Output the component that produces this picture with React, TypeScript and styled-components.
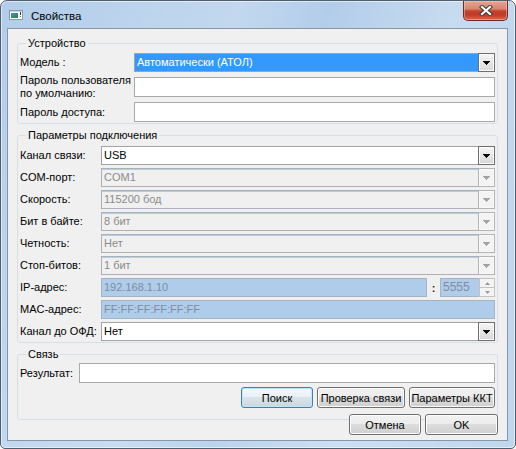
import React from "react";
import styled, { createGlobalStyle } from "styled-components";

const GlobalStyle = createGlobalStyle`
  html, body { margin: 0; padding: 0; background: #ffffff; }
  body { width: 516px; height: 449px; overflow: hidden; }
  *, *::before, *::after { box-sizing: border-box; }
`;

type Tone = "selected" | "enabled" | "disabled";

const Frame = styled.div`
  width: 516px;
  height: 449px;
  display: flex;
  flex-direction: column;
  border: 1px solid #4f5f70;
  border-radius: 7px 7px 5px 5px;
  padding: 0 7px 7px 6px;
  background:
    linear-gradient(105deg, rgba(255,255,255,0) 0%, rgba(255,255,255,0.22) 38%, rgba(255,255,255,0) 52%, rgba(255,255,255,0.28) 72%, rgba(255,255,255,0.08) 100%),
    linear-gradient(180deg, #b2cdea 0%, #bad3ed 100%);
  box-shadow: inset 0 0 0 1px rgba(255, 255, 255, 0.55);
  font-family: "Liberation Sans", Arial, sans-serif;
  font-size: 11px;
  color: #000;
  overflow: hidden;
`;

const TitleBar = styled.div`
  height: 27px;
  flex: none;
  display: flex;
  align-items: flex-start;
`;

const AppIcon = styled.svg`
  flex: none;
  margin: 9px 0 0 2px;
`;

const Title = styled.span`
  margin: 8px 0 0 8px;
  font-size: 11.5px;
  line-height: 14px;
  color: #000;
`;

const CloseButton = styled.div`
  margin-left: auto;
  width: 45px;
  height: 20px;
  border: 1px solid #6f2a20;
  border-top: none;
  border-radius: 0 0 5px 5px;
  background: linear-gradient(180deg, #e3a594 0%, #d88670 42%, #c3432d 52%, #c03b26 72%, #d8684d 100%);
  box-shadow: inset 0 0 0 1px rgba(255, 214, 200, 0.45);
  display: flex;
  align-items: center;
  justify-content: center;
`;

const Client = styled.div`
  flex: 1;
  display: flex;
  flex-direction: column;
  background: #f0f0f0;
  border: 1px solid #8796a6;
  padding: 8px 9px 5px 9px;
`;

const Group = styled.fieldset<{ $top: number; $pad: string }>`
  margin: ${(p) => p.$top}px 0 0 0;
  padding: ${(p) => p.$pad};
  border: 1px solid #d5dfe5;
  border-radius: 3px;
  min-width: 0;
`;

const Legend = styled.legend`
  margin-left: 6px;
  padding: 0 2px;
  font-size: 11px;
  line-height: 13px;
`;

const FormGrid = styled.div<{ $label: number; $rows: string; $gap: number }>`
  display: grid;
  grid-template-columns: ${(p) => p.$label}px minmax(0, 1fr);
  grid-template-rows: ${(p) => p.$rows};
  row-gap: ${(p) => p.$gap}px;
  align-items: center;
`;

const Label = styled.span`
  font-size: 11px;
  line-height: 13px;
  white-space: nowrap;
`;

const TextBox = styled.div<{ $h: number; $blue?: boolean }>`
  height: ${(p) => p.$h}px;
  border: 1px solid ${(p) => (p.$blue ? "#a7b3bf" : "#a9a9a9")};
  background: ${(p) => (p.$blue ? "#afcceb" : "#ffffff")};
  padding: 0 2px;
  line-height: ${(p) => p.$h - 2}px;
  color: #7e8ea0;
  white-space: nowrap;
  overflow: hidden;
`;

const ComboFrame = styled.div<{ $tone: Tone }>`
  height: 19px;
  display: flex;
  border: 1px solid ${(p) => (p.$tone === "disabled" ? "#aeb1b4" : "#a3a3a3")};
  background: ${(p) => (p.$tone === "disabled" ? "#f0f0f0" : "#ffffff")};
  box-shadow: ${(p) => (p.$tone === "disabled" ? "inset 0 1px 0 #b4cee9" : "none")};
`;

const ComboValue = styled.div<{ $tone: Tone }>`
  flex: 1;
  min-width: 0;
  padding-left: 2px;
  line-height: 17px;
  white-space: nowrap;
  overflow: hidden;
  background: ${(p) => (p.$tone === "selected" ? "#3399ff" : "transparent")};
  color: ${(p) => (p.$tone === "selected" ? "#ffffff" : p.$tone === "disabled" ? "#8b8b8b" : "#000000")};
`;

const ArrowBox = styled.div<{ $tone: Tone }>`
  width: 17px;
  flex: none;
  margin: -1px -1px -1px 0;
  display: flex;
  align-items: center;
  justify-content: center;
  border: 1px solid ${(p) => (p.$tone === "disabled" ? "#b4b4b4" : "#6e6e6e")};
  background: ${(p) =>
    p.$tone === "disabled" ? "#f3f3f3" : "linear-gradient(180deg, #f6f6f6 0%, #e6e6e6 50%, #d7d7d7 100%)"};
  box-shadow: inset 0 0 0 1px ${(p) => (p.$tone === "disabled" ? "#f9f9f9" : "#fbfbfb")};
`;

const IpRow = styled.div`
  height: 19px;
  display: flex;
  align-items: center;
`;

const IpField = styled(TextBox)`
  flex: 1;
  min-width: 0;
`;

const Colon = styled.span`
  width: 13px;
  flex: none;
  text-align: center;
  font-weight: bold;
  font-size: 11px;
  color: #222;
`;

const SpinBox = styled.div`
  width: 55px;
  height: 19px;
  flex: none;
  display: flex;
  border: 1px solid #a7b3bf;
  background: #afcceb;
`;

const SpinText = styled.div`
  flex: 1;
  padding-left: 2px;
  line-height: 17px;
  font-size: 12px;
  color: #7e8ea0;
`;

const SpinButtons = styled.div`
  width: 16px;
  display: flex;
  flex-direction: column;
  margin: -1px -1px -1px 0;
`;

const SpinHalf = styled.div`
  flex: 1;
  display: flex;
  align-items: center;
  justify-content: center;
  border: 1px solid #c3c3c3;
  background: #f4f4f4;
  & + & {
    border-top: none;
  }
`;

const ButtonRow = styled.div<{ $top: number }>`
  margin-top: ${(p) => p.$top}px;
  display: flex;
  justify-content: flex-end;
  gap: 4px;
`;

const PushButton = styled.button<{ $w: number; $default?: boolean }>`
  width: ${(p) => p.$w}px;
  height: 21px;
  padding: 0;
  font-family: inherit;
  font-size: 11px;
  color: #000;
  white-space: nowrap;
  border: 1px solid ${(p) => (p.$default ? "#3c7fb1" : "#707070")};
  border-radius: 3px;
  background: ${(p) =>
    p.$default
      ? "linear-gradient(180deg, #f3f8fb 0%, #e9f0f5 49%, #d9e3ea 50%, #cbd7df 100%)"
      : "linear-gradient(180deg, #f2f2f2 0%, #ebebeb 49%, #dddddd 50%, #cfcfcf 100%)"};
  box-shadow: inset 0 0 0 1px ${(p) => (p.$default ? "#bfe6fa" : "#fcfcfc")};
`;

const Arrow = ({ color }: { color: string }) => (
  <svg width="7" height="4" viewBox="0 0 7 4" shapeRendering="crispEdges">
    <polygon points="0,0 7,0 3.5,4" fill={color} />
  </svg>
);

const SmallArrow = ({ up }: { up?: boolean }) => (
  <svg width="5" height="3" viewBox="0 0 5 3">
    <polygon points={up ? "0,3 5,3 2.5,0" : "0,0 5,0 2.5,3"} fill="#9a9a9a" />
  </svg>
);

const Combo = ({ value, tone }: { value: string; tone: Tone }) => (
  <ComboFrame $tone={tone}>
    <ComboValue $tone={tone}>{value}</ComboValue>
    <ArrowBox $tone={tone}>
      <Arrow color={tone === "disabled" ? "#a3a3a3" : "#000000"} />
    </ArrowBox>
  </ComboFrame>
);

const disabledRows: [string, string][] = [
  ["COM-порт:", "COM1"],
  ["Скорость:", "115200 бод"],
  ["Бит в байте:", "8 бит"],
  ["Четность:", "Нет"],
  ["Стоп-битов:", "1 бит"],
];

export default function App() {
  return (
    <>
      <GlobalStyle />
      <Frame>
        <TitleBar>
          <AppIcon width="14" height="10" viewBox="0 0 14 10">
            <defs>
              <linearGradient id="ico" x1="0" y1="0" x2="1" y2="1">
                <stop offset="0" stopColor="#4a9ab8" />
                <stop offset="1" stopColor="#2f7a4a" />
              </linearGradient>
            </defs>
            <rect x="0.5" y="0.5" width="13" height="9" fill="#ffffff" stroke="#8d9aa6" />
            <rect x="1" y="1" width="12" height="1" fill="#c9d9e8" />
            <rect x="2" y="3" width="7" height="5" fill="url(#ico)" />
            <rect x="11" y="2" width="1" height="3" fill="#2a2a2a" />
            <rect x="11" y="6" width="1" height="1" fill="#3a9a4a" />
          </AppIcon>
          <Title>Свойства</Title>
          <CloseButton>
            <svg width="14" height="11" viewBox="0 0 14 11">
              <path d="M3 2 L11 9 M11 2 L3 9" stroke="#3b3b3b" strokeWidth="4.2" strokeLinecap="square" />
              <path d="M3 2 L11 9 M11 2 L3 9" stroke="#ffffff" strokeWidth="2.2" strokeLinecap="square" />
            </svg>
          </CloseButton>
        </TitleBar>
        <Client>
          <Group $top={0} $pad="3px 2px 1px 2px">
            <Legend>Устройство</Legend>
            <FormGrid $label={114} $rows="19px 26px 20px" $gap={2}>
              <Label>Модель :</Label>
              <Combo value="Автоматически (АТОЛ)" tone="selected" />
              <Label>
                Пароль пользователя
                <br />
                по умолчанию:
              </Label>
              <TextBox $h={20} />
              <Label>Пароль доступа:</Label>
              <TextBox $h={20} />
            </FormGrid>
          </Group>
          <Group $top={5} $pad="4px 2px 1px 2px">
            <Legend>Параметры подключения</Legend>
            <FormGrid $label={81} $rows="repeat(9, 19px)" $gap={3}>
              <Label>Канал связи:</Label>
              <Combo value="USB" tone="enabled" />
              {disabledRows.map(([label, value]) => (
                <React.Fragment key={label}>
                  <Label>{label}</Label>
                  <Combo value={value} tone="disabled" />
                </React.Fragment>
              ))}
              <Label>IP-адрес:</Label>
              <IpRow>
                <IpField $h={19} $blue>
                  192.168.1.10
                </IpField>
                <Colon>:</Colon>
                <SpinBox>
                  <SpinText>5555</SpinText>
                  <SpinButtons>
                    <SpinHalf>
                      <SmallArrow up />
                    </SpinHalf>
                    <SpinHalf>
                      <SmallArrow />
                    </SpinHalf>
                  </SpinButtons>
                </SpinBox>
              </IpRow>
              <Label>MAC-адрес:</Label>
              <TextBox $h={19} $blue>
                FF:FF:FF:FF:FF:FF
              </TextBox>
              <Label>Канал до ОФД:</Label>
              <Combo value="Нет" tone="enabled" />
            </FormGrid>
          </Group>
          <Group $top={5} $pad="2px 2px 11px 2px">
            <Legend>Связь</Legend>
            <FormGrid $label={59} $rows="20px" $gap={0}>
              <Label>Результат:</Label>
              <TextBox $h={20} />
            </FormGrid>
            <ButtonRow $top={4}>
              <PushButton $w={72} $default>
                Поиск
              </PushButton>
              <PushButton $w={88}>Проверка связи</PushButton>
              <PushButton $w={86}>Параметры ККТ</PushButton>
            </ButtonRow>
          </Group>
          <ButtonRow $top={-6}>
            <PushButton $w={72}>Отмена</PushButton>
            <PushButton $w={73}>OK</PushButton>
          </ButtonRow>
        </Client>
      </Frame>
    </>
  );
}
